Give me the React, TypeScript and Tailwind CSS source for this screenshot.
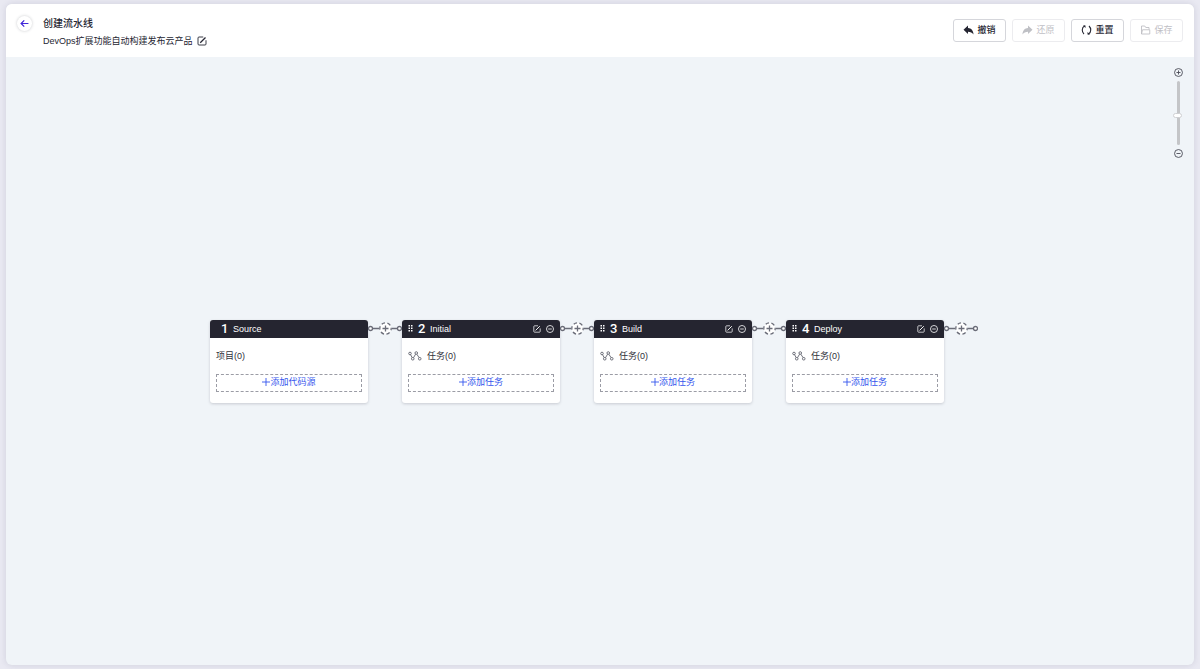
import React, { useState } from 'react';

interface Stage {
  id: number;
  name: string;
  countLabel: string;
  addLabel: string;
  fixed?: boolean;
}

interface IconProps {
  className?: string;
}

const INITIAL_STAGES: Stage[] = [
  { id: 1, name: 'Source', countLabel: '项目(0)', addLabel: '添加代码源', fixed: true },
  { id: 2, name: 'Initial', countLabel: '任务(0)', addLabel: '添加任务' },
  { id: 3, name: 'Build', countLabel: '任务(0)', addLabel: '添加任务' },
  { id: 4, name: 'Deploy', countLabel: '任务(0)', addLabel: '添加任务' },
];

const BackIcon = ({ className }: IconProps) => (
  <svg viewBox="0 0 16 16" fill="none" stroke="currentColor" strokeWidth="2.2" className={className}>
    <path d="M15 8H2M7.5 2.5L2 8l5.5 5.5" />
  </svg>
);

const EditIcon = ({ className }: IconProps) => (
  <svg viewBox="0 0 20 20" fill="none" stroke="currentColor" strokeWidth="1.8" className={className}>
    <path d="M12.5 2H4a2 2 0 0 0-2 2v12a2 2 0 0 0 2 2h12a2 2 0 0 0 2-2V8.5" />
    <path d="M6.5 13.5L17 3" strokeWidth="2.4" />
  </svg>
);

const UndoIcon = ({ className }: IconProps) => (
  <svg viewBox="0 0 22 20" fill="currentColor" className={className}>
    <path d="M10 1v5c6.500.5 10.500 5 11 13-2.600-4-6-5.500-11-5.500V18L1 9.500z" />
  </svg>
);

const RedoIcon = ({ className }: IconProps) => (
  <svg viewBox="0 0 22 20" fill="currentColor" className={className}>
    <path d="M12 1v5C5.500 6.500 1.500 11 1 19c2.600-4 6-5.500 11-5.500V18l9-8.500z" />
  </svg>
);

const ResetIcon = ({ className }: IconProps) => (
  <svg viewBox="0 0 22 20" fill="none" stroke="currentColor" strokeWidth="2.2" className={className}>
    <path d="M7.500 1.500C4 3.500 2.500 6.500 2.500 10c0 3.200 1.200 5.800 3.500 8" />
    <path d="M14.500 18.500c3.500-2 5-5 5-8.500 0-3.200-1.200-5.800-3.500-8" />
    <path d="M4 1h5v5zM18 19h-5v-5z" fill="currentColor" stroke="none" />
  </svg>
);

const FolderIcon = ({ className }: IconProps) => (
  <svg viewBox="0 0 20 20" fill="none" stroke="currentColor" strokeWidth="1.800" className={className}>
    <path d="M2 18V2h6.500l2 3H17v4" />
    <path d="M2 18L4 9.500h14.500V18z" />
  </svg>
);

const MinusCircleIcon = ({ className }: IconProps) => (
  <svg viewBox="0 0 20 20" fill="none" stroke="currentColor" strokeWidth="2" className={className}>
    <circle cx="10" cy="10" r="8.800" />
    <path d="M5.500 10h9" />
  </svg>
);

const PlusCircleIcon = ({ className }: IconProps) => (
  <svg viewBox="0 0 20 20" fill="none" stroke="currentColor" strokeWidth="2" className={className}>
    <circle cx="10" cy="10" r="8.800" />
    <path d="M5.500 10h9M10 5.500v9" />
  </svg>
);

const PlusIcon = ({ className }: IconProps) => (
  <svg viewBox="0 0 16 16" fill="none" stroke="currentColor" strokeWidth="1.800" className={className}>
    <path d="M0 8h16M8 0v16" />
  </svg>
);

const GripIcon = ({ className }: IconProps) => (
  <svg viewBox="0 0 10 14" fill="currentColor" className={className}>
    {[1, 6].map(x => [0, 5, 10].map(y => <rect key={`${x}-${y}`} x={x} y={y} width="3" height="3" />))}
  </svg>
);

const FlowIcon = ({ className }: IconProps) => (
  <svg viewBox="0 0 28 20" fill="none" stroke="currentColor" strokeWidth="1.800" className={className}>
    <circle cx="4" cy="5" r="2.600" />
    <circle cx="9.500" cy="15.500" r="2.600" />
    <circle cx="16.500" cy="4" r="2.600" />
    <circle cx="23.500" cy="15.500" r="2.600" />
    <path d="M5.200 7.400l3 5.700M11 13.400l4.200-7.100M17.700 6.400l4.400 6.800" />
  </svg>
);

const Connector = () => (
  <button type="button" aria-label="添加阶段" className="mt-0.5 h-3.5 w-[34px] shrink-0 text-[#6a6c78]">
    <svg viewBox="0 0 34 14" fill="none" stroke="currentColor" className="h-3.5 w-[34px]">
      <path d="M5 6.500h6M24 6.500h6" strokeWidth="1.600" />
      <circle cx="17.500" cy="6.500" r="5.700" fill="#fff" strokeWidth="1.300" strokeDasharray="3.500 2.470" strokeDashoffset="1.700" />
      <path d="M14.500 6.500h6M17.500 3.500v6" strokeWidth="1.300" />
      <circle cx="2.500" cy="6.500" r="2" fill="#fff" strokeWidth="1.300" />
      <circle cx="31.500" cy="6.500" r="2" fill="#fff" strokeWidth="1.300" />
    </svg>
  </button>
);

interface ToolButtonProps {
  icon: React.ReactNode;
  label: string;
  disabled?: boolean;
  onClick?: () => void;
}

const ToolButton: React.FC<ToolButtonProps> = ({ icon, label, disabled, onClick }) => (
  <button
    type="button"
    disabled={disabled}
    onClick={onClick}
    className="flex h-[23px] w-[53px] items-center justify-center gap-[3px] rounded-[3px] border border-[#d5d6db] bg-white pb-0.5 font-medium text-[#252632] disabled:border-[#ececef] disabled:font-normal disabled:text-[#bfc0c5]"
  >
    {icon}
    {label}
  </button>
);

const StageCard: React.FC<{ stage: Stage }> = ({ stage }) => (
  <section className="w-[158px] shrink-0 overflow-hidden rounded-[3px] bg-white shadow-[0_1px_3px_rgba(40,42,60,0.2)]">
    <header className="flex h-[18px] items-center bg-[#252530] px-1.5 text-white">
      {stage.fixed ? <span className="w-1" /> : <GripIcon className="h-[7px] w-[5px]" />}
      <span className={`${stage.fixed ? '' : 'ml-1'} w-[13px] shrink-0 pl-px font-[Roboto] text-[13px] leading-[18px] font-medium`}>{stage.id}</span>
      <h2 className="flex-1 truncate">{stage.name}</h2>
      {!stage.fixed && (
        <div className="flex gap-[5px]">
          <button type="button" aria-label="编辑阶段"><EditIcon className="size-2" /></button>
          <button type="button" aria-label="删除阶段"><MinusCircleIcon className="size-2" /></button>
        </div>
      )}
    </header>
    <div className="px-1.5 pt-3 pb-[11px]">
      <div className="flex h-3 items-center gap-[5px] text-[#30313b]">
        {!stage.fixed && <FlowIcon className="h-2.5 w-3.5 text-[#62646f]" />}
        <span>{stage.countLabel}</span>
      </div>
      <button
        type="button"
        className="mt-3 flex h-[18px] w-full items-center justify-center border border-dashed border-[#9b9ca5] pb-0.5 text-[#3355ed]"
      >
        <PlusIcon className="size-2" />
        {stage.addLabel}
      </button>
    </div>
  </section>
);

export default function App() {
  const [zoom, setZoom] = useState(45);
  const [stages, setStages] = useState<Stage[]>(INITIAL_STAGES);

  return (
    <div className="flex min-h-screen flex-col bg-[#e9e9f2] px-1.5 py-1 font-['Liberation_Sans','Noto_Sans_CJK_SC',sans-serif] text-[9px] leading-3 text-[#252632]">
      <main className="flex flex-1 flex-col overflow-hidden rounded-md bg-[#f0f4f8] shadow-[0_0_6px_rgba(60,60,90,0.14)]">
        <header className="flex h-[53px] items-start justify-between bg-white px-[11px]">
          <div className="flex gap-[11px] pt-3">
            <button type="button" aria-label="返回" className="flex size-[15px] items-center justify-center rounded-full bg-white text-[#4026d9] shadow-[0_0_3px_rgba(40,42,60,0.25)]">
              <BackIcon className="size-[9px]" />
            </button>
            <div>
              <h1 className="text-[10px] leading-4 font-medium">创建流水线</h1>
              <div className="mt-[3px] flex items-center gap-1">
                <p>DevOps扩展功能自动构建发布云产品</p>
                <button type="button" aria-label="编辑描述"><EditIcon className="size-2.5" /></button>
              </div>
            </div>
          </div>
          <div className="flex gap-1.5 pt-[15px]">
            <ToolButton icon={<UndoIcon className="h-2.5 w-[11px]" />} label="撤销" />
            <ToolButton icon={<RedoIcon className="h-2.5 w-[11px]" />} label="还原" disabled />
            <ToolButton icon={<ResetIcon className="h-2.5 w-[11px]" />} label="重置" onClick={() => setStages(INITIAL_STAGES)} />
            <ToolButton icon={<FolderIcon className="h-2.5 w-[11px]" />} label="保存" disabled />
          </div>
        </header>

        <div className="relative flex flex-1 items-center justify-center pr-3">
          <div className="flex items-start">
            {stages.map(stage => (
              <React.Fragment key={stage.id}>
                <StageCard stage={stage} />
                <Connector />
              </React.Fragment>
            ))}
          </div>

          {/* zoom control floats over the canvas */}
          <div className="absolute top-[11px] right-[11px] flex w-[9px] flex-col items-center gap-1 text-[#4b4c57]">
            <button type="button" aria-label="放大" onClick={() => setZoom(z => Math.min(100, z + 5))}>
              <PlusCircleIcon className="size-[9px]" />
            </button>
            <input
              type="range"
              aria-label="缩放"
              min={0}
              max={100}
              value={zoom}
              onChange={e => setZoom(Number(e.target.value))}
              className="m-0 h-16 w-[3px] appearance-none rounded-full bg-[#c4c5c8] [direction:rtl] [writing-mode:vertical-lr] [&::-webkit-slider-thumb]:-ml-0.5 [&::-webkit-slider-thumb]:h-[5px] [&::-webkit-slider-thumb]:w-[9px] [&::-webkit-slider-thumb]:appearance-none [&::-webkit-slider-thumb]:rounded-sm [&::-webkit-slider-thumb]:border [&::-webkit-slider-thumb]:border-[#cfd0d3] [&::-webkit-slider-thumb]:bg-white"
            />
            <button type="button" aria-label="缩小" onClick={() => setZoom(z => Math.max(0, z - 5))}>
              <MinusCircleIcon className="size-[9px]" />
            </button>
          </div>
        </div>
      </main>
    </div>
  );
}
